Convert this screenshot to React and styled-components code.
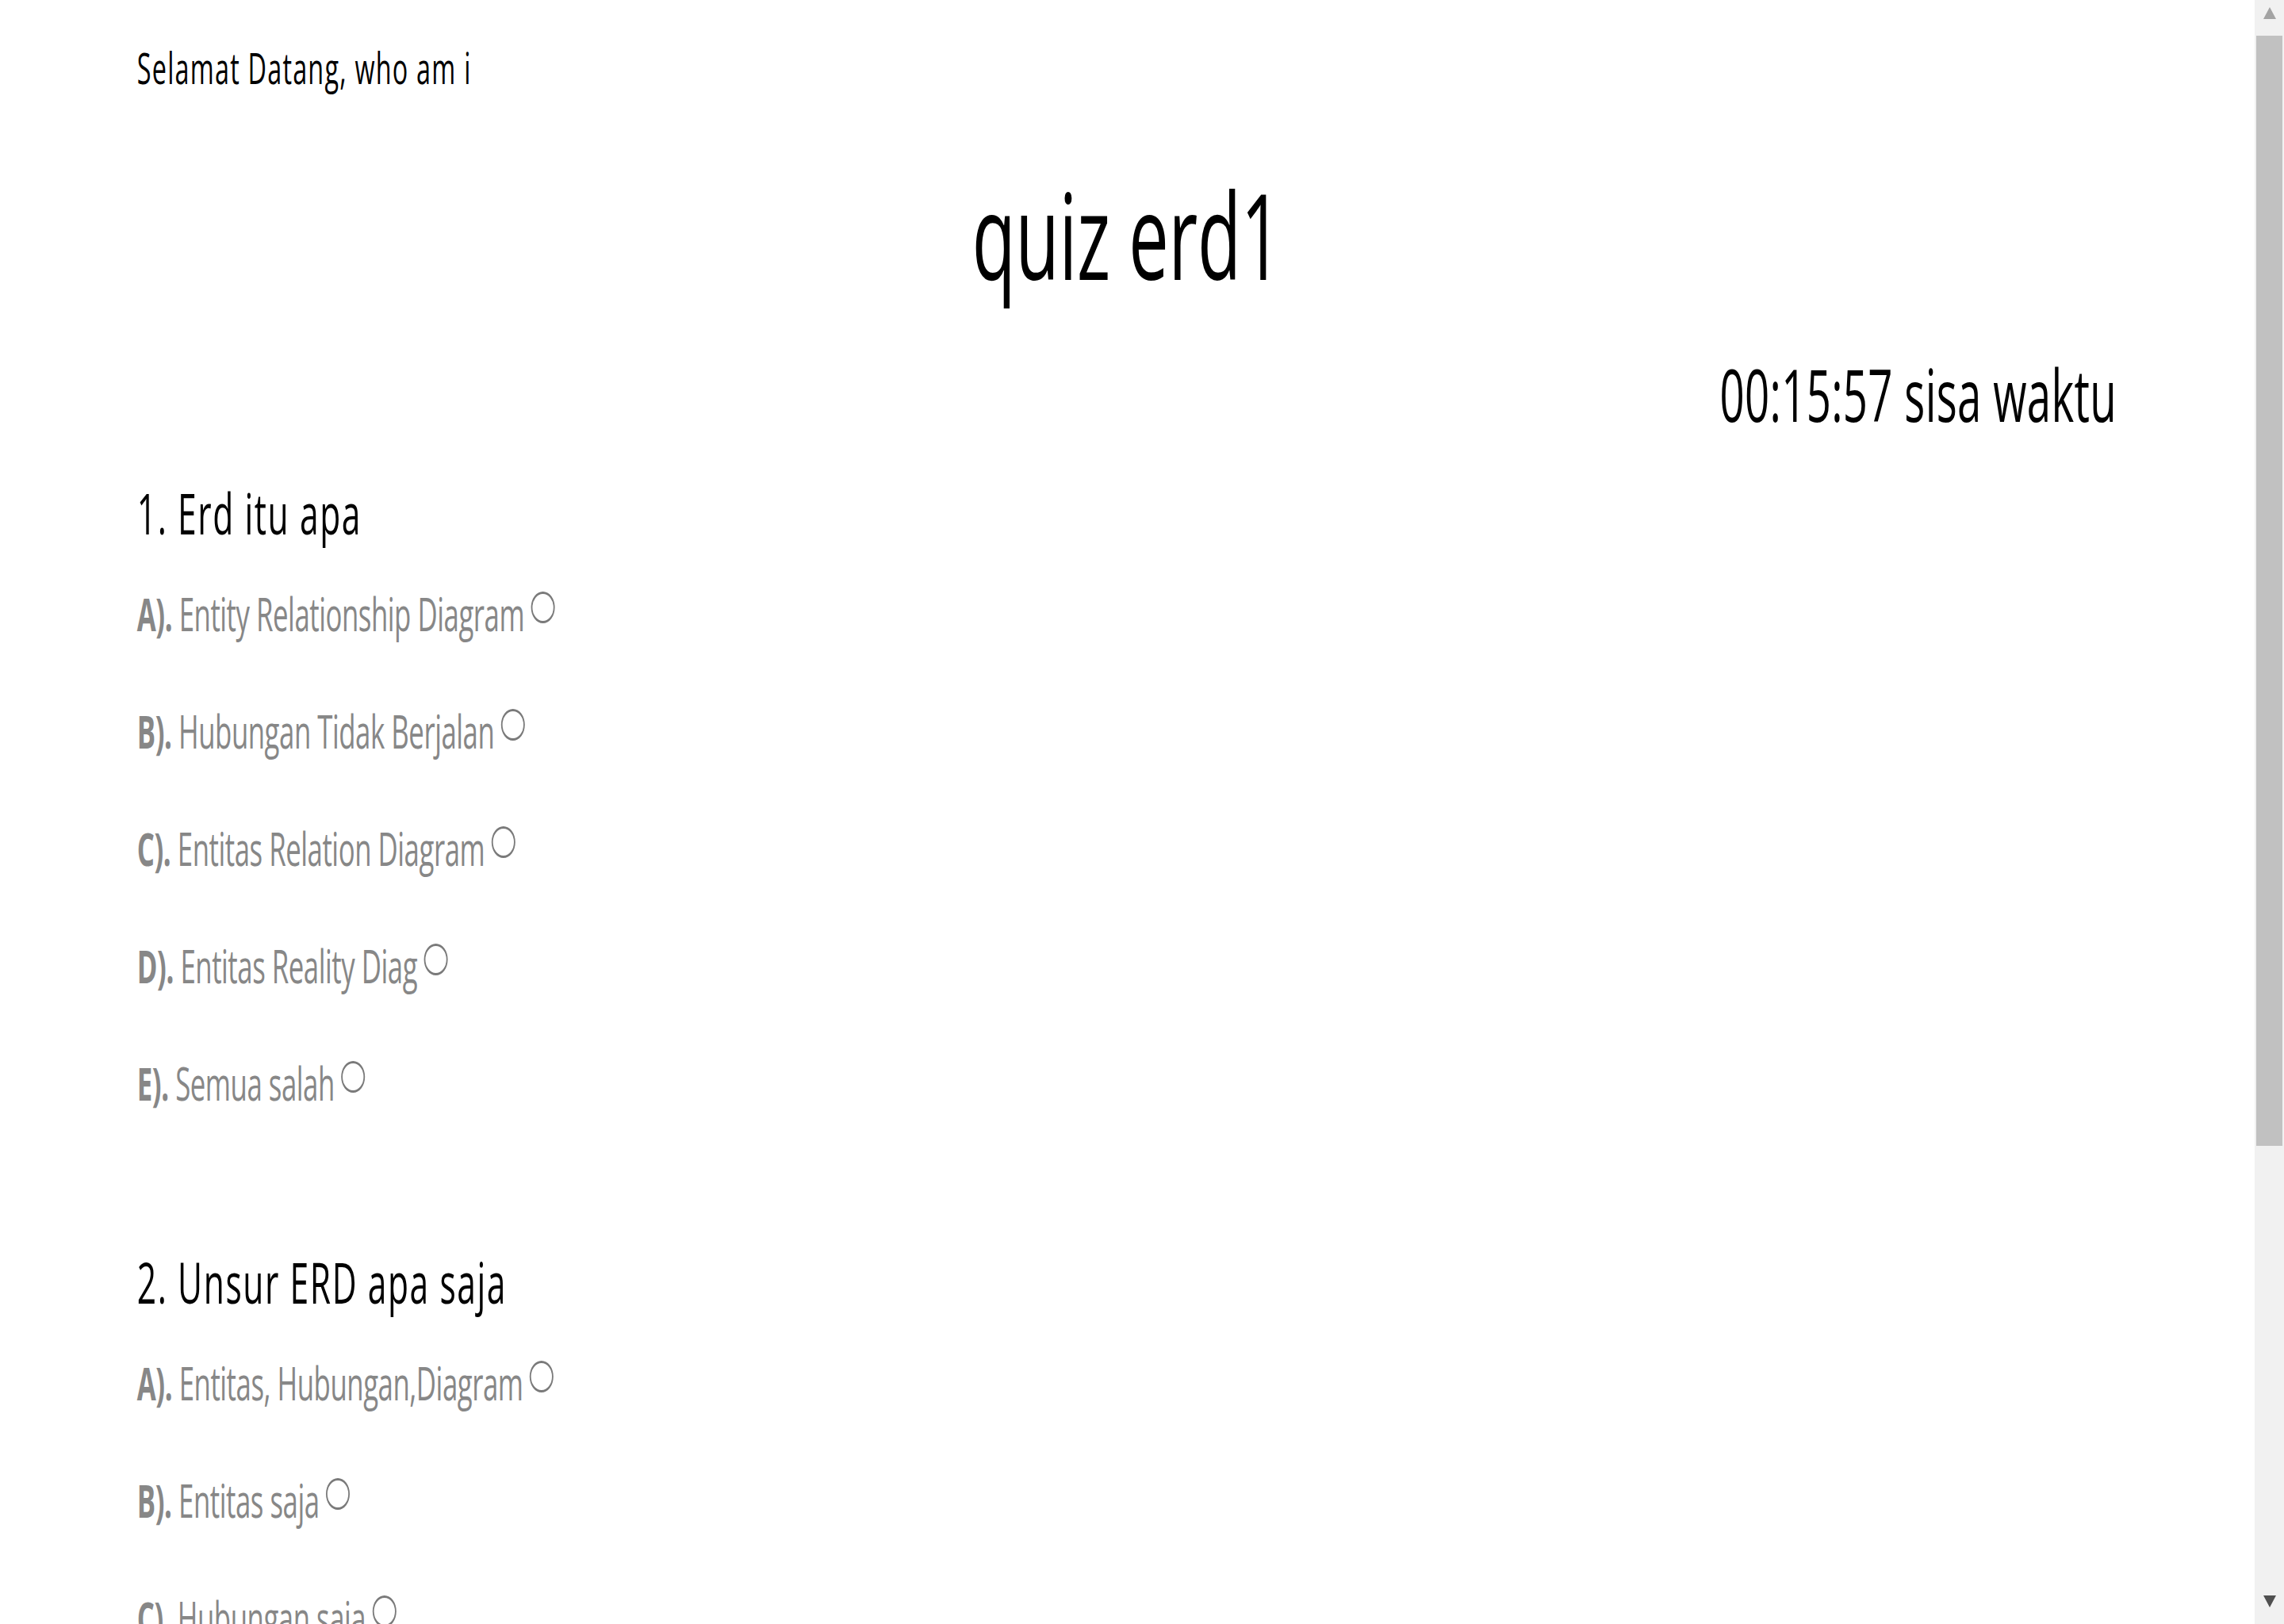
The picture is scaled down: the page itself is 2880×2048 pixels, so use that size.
import React from 'react';
import styled, { createGlobalStyle } from 'styled-components';

// the capture is squeezed sideways, so the page is laid out wide and scaled down
const SQUEEZE = 0.6;

const GlobalStyle = createGlobalStyle`
  html, body {
    margin: 0;
    padding: 0;
    background: #fff;
  }
  body {
    font-family: 'Open Sans', 'Liberation Sans', sans-serif;
    color: #000;
  }
`;

const Viewport = styled.div`
  display: flex;
  height: 100vh;
  overflow: hidden;
`;

const Page = styled.div`
  flex: 1;
  min-width: 0;
  overflow: hidden;
`;

const Squeeze = styled.main`
  box-sizing: border-box;
  width: calc(100% / ${SQUEEZE});
  padding: 53px 290px 0 288px;
  transform: scaleX(${SQUEEZE});
  transform-origin: left top;
`;

const Greeting = styled.p`
  margin: 0;
  font-size: 54px;
  line-height: 1.2;
  letter-spacing: 2px;
`;

const Title = styled.h1`
  margin: 87px 0 0;
  font-size: 150px;
  font-weight: 400;
  line-height: 1.2;
  letter-spacing: -0.4px;
  text-align: center;
`;

const Timer = styled.div`
  margin-top: 58px;
  font-size: 91px;
  line-height: 1.2;
  letter-spacing: 0.5px;
  text-align: right;
`;

const QuestionList = styled.div`
  display: flex;
  flex-direction: column;
  gap: 165px;
  margin-top: 52px;
`;

const Question = styled.section`
  display: flex;
  flex-direction: column;
`;

const QuestionText = styled.h2`
  margin: 0 0 41px;
  font-size: 71px;
  font-weight: 400;
  line-height: 1.2;
  letter-spacing: 2.6px;
`;

const Options = styled.div`
  display: flex;
  flex-direction: column;
  gap: 61px;
`;

const Option = styled.label`
  display: flex;
  align-items: flex-start;
  font-size: 58px;
  line-height: 87px;
  letter-spacing: -0.8px;
  color: #878787;
  b {
    font-weight: 700;
  }
`;

const Radio = styled.input.attrs({ type: 'radio' })`
  appearance: none;
  flex-shrink: 0;
  box-sizing: border-box;
  width: 50px;
  height: 40px;
  margin: 16px 0 0 14px;
  border: 3.5px solid #7a7a7a;
  border-radius: 50%;
  background: #fff;
`;

const ScrollTrack = styled.div`
  display: flex;
  flex-direction: column;
  flex-shrink: 0;
  width: 37px;
  background: #f1f1f1;
`;

const ScrollButton = styled.div`
  display: flex;
  justify-content: center;
  box-sizing: border-box;
  height: 45px;
  padding-top: 9px;
`;

const Arrow = styled.span`
  width: 0;
  height: 0;
  border-left: 8.5px solid transparent;
  border-right: 8.5px solid transparent;
  ${(p) =>
    p.$down
      ? 'border-top: 15px solid #505050;'
      : 'border-bottom: 15px solid #a3a3a3;'}
`;

const Thumb = styled.div`
  height: 1400px;
  margin: 0 2px;
  background: #c1c1c1;
`;

const TrackRest = styled.div`
  flex: 1;
`;

const questions = [
  {
    no: 1,
    text: 'Erd itu apa',
    options: [
      'Entity Relationship Diagram',
      'Hubungan Tidak Berjalan',
      'Entitas Relation Diagram',
      'Entitas Reality Diag',
      'Semua salah',
    ],
  },
  {
    no: 2,
    text: 'Unsur ERD apa saja',
    options: [
      'Entitas, Hubungan,Diagram',
      'Entitas saja',
      'Hubungan saja',
      'Diagram saja',
      'Semua salah',
    ],
  },
];

const letters = ['A', 'B', 'C', 'D', 'E'];

const App = () => (
  <Viewport>
    <GlobalStyle />
    <Page>
      <Squeeze>
        <Greeting>Selamat Datang, who am i</Greeting>
        <Title>quiz erd1</Title>
        <Timer>00:15:57 sisa waktu</Timer>
        <QuestionList>
          {questions.map((q) => (
            <Question key={q.no}>
              <QuestionText>
                {q.no}. {q.text}
              </QuestionText>
              <Options>
                {q.options.map((opt, i) => (
                  <Option key={opt}>
                    <span>
                      <b>{letters[i]}).</b> {opt}
                    </span>
                    <Radio name={`soal-${q.no}`} value={letters[i]} />
                  </Option>
                ))}
              </Options>
            </Question>
          ))}
        </QuestionList>
      </Squeeze>
    </Page>
    <ScrollTrack>
      <ScrollButton>
        <Arrow />
      </ScrollButton>
      <Thumb />
      <TrackRest />
      <ScrollButton>
        <Arrow $down />
      </ScrollButton>
    </ScrollTrack>
  </Viewport>
);

export default App;
